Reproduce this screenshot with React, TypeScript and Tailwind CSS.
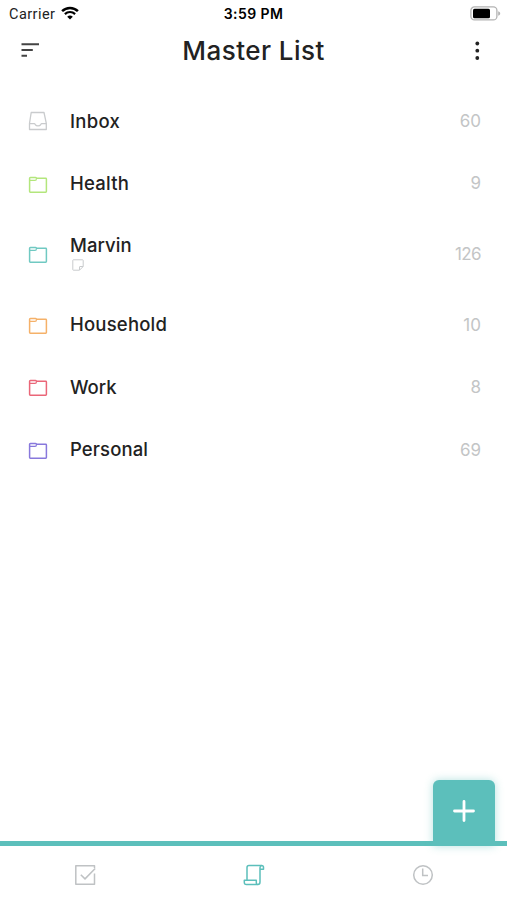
const lists = [
  { title: "Inbox", count: 60, color: "text-[#c9cbcd]", inbox: true },
  { title: "Health", count: 9, color: "text-[#b3e67c]" },
  { title: "Marvin", count: 126, color: "text-[#70c9c2]", note: true },
  { title: "Household", count: 10, color: "text-[#f5b169]" },
  { title: "Work", count: 8, color: "text-[#ea6678]" },
  { title: "Personal", count: 69, color: "text-[#8878dc]" },
];

const tracking: Record<string, string> = {
  Inbox: "tracking-[0.3px]",
  Health: "tracking-[0.25px]",
  Marvin: "tracking-[0.05px]",
  Household: "tracking-[0.2px]",
  Work: "tracking-[0px]",
  Personal: "tracking-[0.1px]",
};

function InboxIcon() {
  return (
    <svg width="20" height="20" viewBox="0 0 20 20" fill="none" stroke="currentColor" strokeWidth="1.3" strokeLinejoin="round">
      <path d="M3.2 1.500h12.800l2.300 10.800v6.200H1.500v-6.200z" />
      <path d="M1.500 12.600h4.800c.5 0 .7.500 1.200 1.300.4.700 1 1 2.500 1s2.100-.3 2.500-1c.5-.8.7-1.300 1.200-1.300h4.800" />
    </svg>
  );
}

function FolderIcon() {
  return (
    <svg width="20" height="20" viewBox="0 0 20 20" fill="none" stroke="currentColor" strokeWidth="1.5" strokeLinejoin="round">
      <path d="M1.600 16.600V3.200c0-.5.300-.8.800-.8h5c.6 0 .9.300 1.100.9h9.200c.4 0 .7.300.7.700v12.600c0 .4-.3.700-.7.700H2.300c-.4 0-.7-.3-.7-.7" />
      <path d="M1.700 5.300h5.300c1 0 1.500-.6 1.500-1.900" strokeWidth="1.200" />
    </svg>
  );
}

function NoteIcon() {
  return (
    <svg width="12" height="12" viewBox="0 0 12 12" fill="none" stroke="#c9cbcd" strokeWidth="1" strokeLinejoin="round">
      <path d="M1.300.8h9.400c.3 0 .5.200.5.500v6.200l-3.700 3.700H1.300c-.3 0-.5-.2-.5-.5V1.300c0-.3.200-.5.500-.5z" />
      <path d="M7.500 11V8c0-.3.200-.5.500-.5h3" />
    </svg>
  );
}

function StatusBar() {
  return (
    <div className="grid h-7 grid-cols-3 items-center text-black">
      <div className="flex items-center gap-[6px] pl-[9px]">
        <span className="pt-px font-['Roboto',sans-serif] text-[14.5px] tracking-[0.45px] text-[#222]">Carrier</span>
        <svg width="18" height="14" viewBox="0 0 18 14" fill="none" stroke="black" className="mt-[-2px]">
          <path d="M1.100 5.100a11.300 11.300 0 0 1 15.800 0" strokeWidth="2.500" />
          <path d="M3.900 8.100a7.300 7.300 0 0 1 10.200 0" strokeWidth="2.200" />
          <path d="M9 13.600 6.200 10.800a4 4 0 0 1 5.600 0z" fill="black" stroke="none" />
        </svg>
      </div>
      <div className="pb-[2px] text-center text-[14px] font-semibold tracking-[0.4px] whitespace-nowrap">3:59 PM</div>
      <div className="flex justify-end pr-[6px]">
        <svg width="31" height="15" viewBox="0 0 31 15" className="mt-[-1px]">
          <rect x="0.900" y="0.900" width="26" height="13" rx="3.500" fill="none" stroke="#b3b3b3" strokeWidth="1.300" />
          <rect x="3" y="2.800" width="17" height="9.400" rx="1.500" fill="black" />
          <path d="M28.200 5.200c1.400.5 2 1.300 2 2.300s-.6 1.800-2 2.300z" fill="#b3b3b3" />
        </svg>
      </div>
    </div>
  );
}

export default function App() {
  return (
    <main className="flex h-[900px] w-[507px] flex-col overflow-hidden bg-white font-['Inter',sans-serif] text-[#222]">
      <StatusBar />

      <header className="flex h-[46px] items-center justify-between px-5">
        <svg width="20" height="16" viewBox="0 0 20 16" stroke="#444" strokeWidth="2" className="mt-[-3px]">
          <path d="M1.500 2.200H19M1.500 8h11.300M1.500 13.800H7" />
        </svg>
        <h1 className="text-[26px] leading-none font-medium tracking-[0.45px]">Master List</h1>
        <svg width="20" height="20" viewBox="0 0 20 20" fill="#222">
          <circle cx="10.300" cy="2.500" r="1.900" />
          <circle cx="10.300" cy="9.700" r="1.900" />
          <circle cx="10.300" cy="17" r="1.900" />
        </svg>
      </header>

      {/* Lists */}
      <ul className="flex-1 pt-4">
        {lists.map((l) => (
          <li
            key={l.title}
            className={`flex items-center pr-[26px] pl-7 ${l.note ? "h-[79px]" : "h-[62.400px]"}`}
          >
            <span className={l.inbox ? l.color : `${l.color} pt-[2px]`}>
              {l.inbox ? <InboxIcon /> : <FolderIcon />}
            </span>
            <div className="flex flex-1 flex-col pb-px pl-[22px]">
              <span className={`text-[18.500px] leading-6 font-medium ${tracking[l.title]}`}>{l.title}</span>
              {l.note && (
                <span className="pt-[2px] pb-[3px] pl-[2px]">
                  <NoteIcon />
                </span>
              )}
            </div>
            <span className={`pt-px text-[17px] text-[#c3c5c6] ${l.note ? "tracking-[-0.6px]" : ""}`}>{l.count}</span>
          </li>
        ))}
      </ul>

      {/* Bottom tabs */}
      <nav className="relative grid h-[59px] grid-cols-3 items-center justify-items-center border-t-[5px] border-[#5cbfbb] pt-1">
        <button className="absolute right-3 bottom-[54px] flex h-[66px] w-[62px] items-center justify-center rounded-t-[6px] bg-[#5cbfbb] pb-1 shadow-[0_0_8px_rgba(92,191,187,0.45)]">
          <svg width="22" height="22" viewBox="0 0 22 22" stroke="white" strokeWidth="2.800" strokeLinecap="round">
            <path d="M11 1.500v19M1.500 11h19" />
          </svg>
        </button>

        <svg width="22" height="22" viewBox="0 0 22 22" fill="none" stroke="#bfc2c4" strokeWidth="1.500" strokeLinejoin="round">
          <path d="M20.500 4V1.800H1.800V20.200H20.500V9.500" />
          <path d="m6.800 10.800 4.200 4.100L21.200 4.500" />
        </svg>
        <svg width="22" height="22" viewBox="0 0 22 22" fill="none" stroke="#5cbfbb" strokeWidth="1.500" strokeLinejoin="round">
          <path d="M4 16V3.500c0-1.300.8-2 2-2h12.500c1.300 0 2 .8 2 2v1.800H17" />
          <path d="M18.700 1.600c-1.200.2-1.700.9-1.700 2.100V18c0 1.700-.8 2.500-2.200 2.500" />
          <path d="M1.300 16.200h12v2.200c0 1.400.5 2.100 1.500 2.100H3.500c-1.400 0-2.200-.8-2.200-2.200z" />
        </svg>
        <svg width="22" height="22" viewBox="0 0 22 22" fill="none" stroke="#bfc2c4" strokeWidth="1.500">
          <circle cx="11" cy="11" r="9.300" />
          <path d="M10.700 4.600v6.800H16" />
        </svg>
      </nav>
    </main>
  );
}
